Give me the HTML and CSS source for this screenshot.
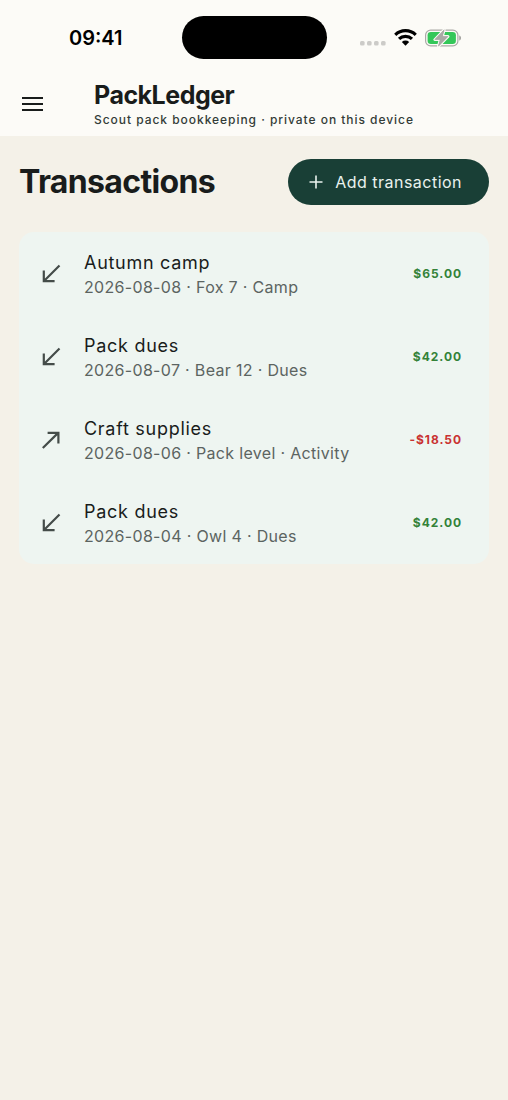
FILE: index.html
```html
<!DOCTYPE html>
<html lang="en">
<head>
<meta charset="utf-8">
<meta name="viewport" content="width=device-width, initial-scale=1">
<title>PackLedger</title>
<link rel="stylesheet" href="styles.css">
</head>
<body>
<header class="top">
  <div class="status">
    <time class="clock">09:41</time>
    <div class="island"></div>
    <div class="indicators">
      <svg class="signal" viewBox="0 0 26 6" aria-hidden="true"><rect x="0" y="1" width="4.6" height="4.4" rx="1.5"/><rect x="7" y="1" width="4.6" height="4.4" rx="1.5"/><rect x="14" y="1" width="4.6" height="4.4" rx="1.5"/><rect x="21" y="1" width="4.6" height="4.4" rx="1.5"/></svg>
      <svg class="wifi" viewBox="0 0 22 16" aria-hidden="true"><path d="M1.2 5.4a14 14 0 0 1 19.6 0M4.8 9.4a8.9 8.9 0 0 1 12.4 0" fill="none" stroke="#000" stroke-width="3"/><path d="M7.5 12.2a5 5 0 0 1 7 0L11 15.8z"/></svg>
      <svg class="battery" viewBox="0 0 37 18" aria-hidden="true"><rect x=".6" y="1.1" width="32.3" height="15.8" rx="5" fill="none" stroke="#aaa9a6" stroke-width="1.2"/><path d="M34.3 6.5c2.2.6 2.2 4.4 0 5z" fill="#9b9a97"/><rect x="2.6" y="3" width="28.3" height="12" rx="3.3" fill="#34c759"/><path d="M19.2.8 9.8 10.6h5.4L13.4 17.2 23 7.4h-5.6z" fill="#aaa9a6" stroke="#fcfbf7" stroke-width="2.8" stroke-linejoin="round" paint-order="stroke"/><path d="M19.2.8 9.8 10.6h5.4L13.4 17.2 23 7.4h-5.6z" fill="#aaa9a6" stroke="#aaa9a6" stroke-width=".6" stroke-linejoin="round"/></svg>
    </div>
  </div>
  <div class="appbar">
    <button class="menu" type="button" aria-label="Open menu"><svg viewBox="0 0 22 16" aria-hidden="true"><path d="M0 2h21M0 8h21M0 14h21"/></svg></button>
    <div class="brand">
      <div class="name">PackLedger</div>
      <div class="tagline">Scout pack bookkeeping · private on this device</div>
    </div>
  </div>
</header>
<main class="content">
  <div class="heading">
    <h1 class="title">Transactions</h1>
    <button class="add" type="button"><svg viewBox="0 0 14 14" aria-hidden="true"><path d="M7 .5v13M.5 7h13"/></svg>Add transaction</button>
  </div>
  <ul class="list">
    <li class="row">
      <svg class="arrow" viewBox="0 0 20 20" aria-hidden="true"><path d="M18.5 1.5 3 17M2.8 6.4v10.8h10.8"/></svg>
      <div class="info"><div class="label">Autumn camp</div><div class="meta">2026-08-08 · Fox 7 · Camp</div></div>
      <div class="amount">$65.00</div>
    </li>
    <li class="row">
      <svg class="arrow" viewBox="0 0 20 20" aria-hidden="true"><path d="M18.5 1.5 3 17M2.8 6.4v10.8h10.8"/></svg>
      <div class="info"><div class="label">Pack dues</div><div class="meta">2026-08-07 · Bear 12 · Dues</div></div>
      <div class="amount">$42.00</div>
    </li>
    <li class="row">
      <svg class="arrow" viewBox="0 0 20 20" aria-hidden="true"><path d="M1.8 18 17.4 2.6M6.6 2.8h10.8v10.8"/></svg>
      <div class="info"><div class="label">Craft supplies</div><div class="meta">2026-08-06 · Pack level · Activity</div></div>
      <div class="amount expense">-$18.50</div>
    </li>
    <li class="row">
      <svg class="arrow" viewBox="0 0 20 20" aria-hidden="true"><path d="M18.5 1.5 3 17M2.8 6.4v10.8h10.8"/></svg>
      <div class="info"><div class="label">Pack dues</div><div class="meta">2026-08-04 · Owl 4 · Dues</div></div>
      <div class="amount">$42.00</div>
    </li>
  </ul>
</main>
</body>
</html>
```
FILE: styles.css
```css
* { box-sizing: border-box; }
body {
  margin: 0;
  background: #f4f1e8;
  color: #191c1b;
  font-family: Inter, "Liberation Sans", sans-serif;
}
button { border: 0; font: inherit; cursor: pointer; }
svg { display: block; flex: none; }

.top { background: #fcfbf7; }
.status {
  display: grid;
  grid-template-columns: 1fr auto 1fr;
  align-items: center;
  padding: 16px 46px 0;
}
.clock {
  padding-left: 23px;
  color: #000;
  font-size: 20px;
  font-weight: 600;
  line-height: 24px;
}
.island { width: 145px; height: 43px; border-radius: 22px; background: #000; }
.indicators { display: flex; align-items: center; justify-content: flex-end; gap: 8px; }
.signal { width: 26px; height: 6px; margin-top: 11px; fill: #cccbc8; }
.wifi { width: 23px; height: 17px; }
.battery { width: 37px; height: 18px; }

.appbar { display: flex; align-items: flex-start; gap: 42px; padding: 21px 13px 7px; }
.menu { display: grid; place-items: center; width: 39px; height: 48px; padding: 0; background: none; }
.menu svg { width: 22px; height: 16px; }
.menu svg path { stroke: #191c1b; stroke-width: 2; }
.name { font-size: 25px; font-weight: 700; line-height: 31px; letter-spacing: -0.02em; }
.tagline { color: #333b38; font-size: 12px; font-weight: 500; line-height: 18px; letter-spacing: 0.08em; }

.content { padding: 23px 19px; }
.heading { display: flex; align-items: center; justify-content: space-between; }
.title { margin: 0; font-size: 32px; font-weight: 700; line-height: 40px; letter-spacing: -0.02em; }
.add {
  display: flex;
  align-items: center;
  gap: 12px;
  height: 46px;
  padding: 0 27px 0 21px;
  border-radius: 23px;
  background: #193f36;
  color: #e9f2ee;
  font-size: 16px;
  letter-spacing: 0.03em;
}
.add svg { width: 14px; height: 14px; }
.add path { stroke: currentColor; stroke-width: 1.6; }

.list { margin: 27px 0 0; padding: 0; border-radius: 15px; background: #eef5f1; list-style: none; }
.row { display: flex; align-items: center; padding: 17px 27px 17px 22px; }
.arrow { width: 20px; height: 20px; margin-right: 23px; }
.arrow path { fill: none; stroke: #444c49; stroke-width: 2.2; }
.info { flex: 1; }
.label { font-size: 18px; line-height: 27px; letter-spacing: 0.04em; }
.meta { color: #5c6461; font-size: 16px; line-height: 22px; letter-spacing: 0.02em; }
.amount { color: #348239; font-size: 12px; font-weight: 700; line-height: 18px; letter-spacing: 0.08em; }
.expense { color: #c93232; }
```
